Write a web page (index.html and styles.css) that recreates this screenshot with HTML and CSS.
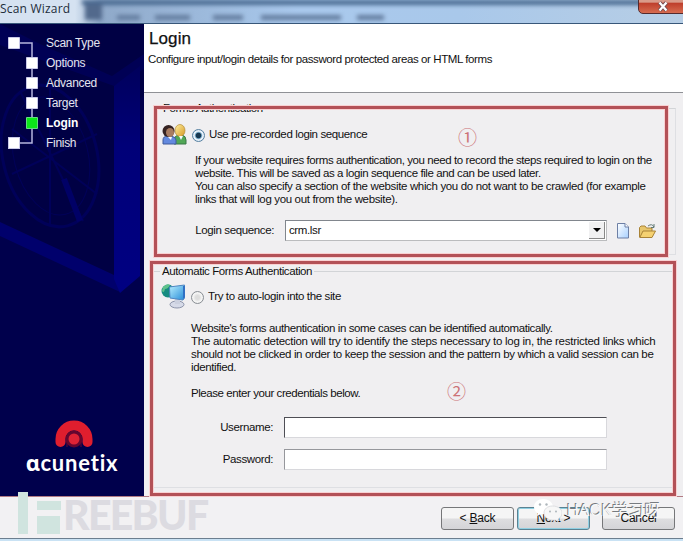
FILE: index.html
```html
<!DOCTYPE html>
<html lang="en">
<head>
<meta charset="utf-8">
<title>Scan Wizard</title>
<link rel="stylesheet" href="styles.css">
</head>
<body>
<div class="window">
  <header class="titlebar">
    <span class="title">Scan Wizard</span>
    <svg class="behind" width="683" height="23" viewBox="0 0 683 23"><g><path d="M82 0H683V5H82Z" fill="#48688f"/><path d="M85 4h17v16H85z" fill="#52698c"/><path d="M117 15h23v5h-23zM155 15h35v5h-35zM213 15h30v5h-30zM261 15h80v5h-80zM357 15h27v5h-27z" fill="#637c9e"/></g></svg>
    <button class="close" aria-label="Close"><svg width="12" height="11" viewBox="0 0 12 11"><path d="M2.5 1.5l7 8M9.5 1.5l-7 8" stroke="#6b4a50" stroke-width="4"/><path d="M2.5 1.5l7 8M9.5 1.5l-7 8" stroke="#fff" stroke-width="2.3"/></svg></button>
  </header>
  <div class="body">
    <aside class="sidebar">
      <svg class="art" width="144" height="472" viewBox="0 0 144 472">
        <defs><linearGradient id="edge" x2="0" y2="1"><stop stop-color="#00005c"/><stop offset=".35" stop-color="#000078"/><stop offset="1" stop-color="#000082"/></linearGradient></defs>
        <rect width="144" height="472" fill="#00004c"/>
        <path d="M0 0H144V72L119 87V255L0 199Z" fill="#000044"/>
        <path d="M0 0L40 20 112 52 144 30V45L114 62 0 21Z" fill="#000055"/>
        <path d="M0 198L114 251 120 268 0 212Z" fill="#00006c"/>
        <path d="M114 62L140 42V252L120 269 114 255Z" fill="url(#edge)"/>
        <g fill="none" stroke="#000059"><ellipse cx="50" cy="132" rx="47" ry="72" stroke-width="3" transform="rotate(-14 50 132)"/><ellipse cx="51" cy="132" rx="37" ry="60" transform="rotate(-14 51 132)"/><path d="M20 67l63 130M50 60v140M12 150l85-40M12 105l85 65" stroke-width="2"/><path d="M64 155l16 42" stroke-width="6" stroke="#000066"/></g>
      </svg>
      <svg class="rail" width="40" height="120" viewBox="0 0 40 120"><path d="M14 19H32V119H14" fill="none" stroke="#b5b5dd" stroke-width="1.5"/><g fill="#fff" stroke="#c9c9e8"><path d="M8.500 13.500h11v11h-11zM26.500 33.500h11v11h-11zM26.500 53.500h11v11h-11zM26.500 73.500h11v11h-11z"/><path d="M26.500 93.500h11v11h-11z" fill="#0ce719" stroke="#64dc80"/></g></svg>
      <span class="last-node"></span>
      <ol class="steps"><li>Scan Type</li><li>Options</li><li>Advanced</li><li>Target</li><li class="current">Login</li><li>Finish</li></ol>
      <div class="brand">
        <svg width="38" height="28" viewBox="0 0 38 28"><path d="M5.500 22V19a13.500 13.500 0 0 1 27 0v3" fill="none" stroke="#df1e2e" stroke-width="10" stroke-linecap="round"/><circle cx="19" cy="19" r="8.500" fill="#65062f"/><circle cx="19" cy="19" r="5.500" fill="#df2335"/><path d="M12 27v-7M26 27v-7" stroke="#65062f" stroke-width="1"/></svg>
        <span><i>ɑ</i>cunetix</span>
      </div>
    </aside>
    <main class="main">
      <div class="heading"><h1>Login</h1><p>Configure input/login details for password protected areas or HTML forms</p></div>
      <section class="group first">
        <h2>Forms Authentication</h2>
        <div class="choice">
          <svg width="25" height="21" viewBox="0 0 25 21"><defs><linearGradient id="face" x2="1" y2="1"><stop stop-color="#fff0a0"/><stop offset="1" stop-color="#d59824"/></linearGradient></defs><path d="M12 20v-4q0-4 5-5h3q4 1 4 5v4z" fill="#51a756" stroke="#397747"/><ellipse cx="18" cy="6.500" rx="5" ry="6" fill="url(#face)" stroke="#b38b36" stroke-width=".7"/><path d="M1 20v-4q0-4 5-4h3q5 1 5 4v4z" fill="#6389df" stroke="#405b9a"/><circle cx="6.500" cy="7" r="6" fill="#352322"/><ellipse cx="8" cy="8.500" rx="4" ry="4.500" fill="#a87c61"/><path d="M6 13l3 3 1-3M17 12l2 4 2-4" fill="#f4f8ff"/></svg>
          <i class="radio checked"></i><span>Use pre-recorded login sequence</span>
        </div>
        <p class="copy"><span class="a1">If your website requires forms authentication, you need to record the steps required to login on the</span><span class="a2">website. This will be saved as a login sequence file and can be used later.</span><span class="a3">You can also specify a section of the website which you do not want to be crawled (for example</span><span class="a4">links that will log you out from the website).</span></p>
        <div class="field select-row"><label>Login sequence:</label><div class="select"><span>crm.lsr</span><b></b></div>
          <svg class="doc" width="14" height="16" viewBox="0 0 14 16"><defs><linearGradient id="sheet" x2="1" y2="1"><stop stop-color="#fff"/><stop offset="1" stop-color="#a8d0ff"/></linearGradient></defs><path d="M1.500.5H9L12.500 4v11h-11z" fill="url(#sheet)" stroke="#6d7fa5"/><path d="M9 .5V4h3.500" fill="#fff" stroke="#6d7fa5"/></svg>
          <svg class="folder" width="17" height="16" viewBox="0 0 17 16"><path d="M.5 14V4.500L2 3h4l1.500 2H13v9z" fill="#e8c66c" stroke="#a98236"/><path d="M.8 14.500L4 8h12.500L13 14.500z" fill="#f5d171" stroke="#a98236"/><path d="M9 3q4-3 6 1m0-3v3.500h-3" fill="none" stroke="#637b78"/></svg>
        </div>
      </section>
      <section class="group second">
        <h2>Automatic Forms Authentication</h2>
        <div class="choice">
          <svg width="25" height="26" viewBox="0 0 25 26"><defs><linearGradient id="screen" x2="1" y2="1"><stop stop-color="#b9f0ff"/><stop offset="1" stop-color="#258bd8"/></linearGradient></defs><circle cx="7" cy="8" r="6.500" fill="#168b80"/><path d="M2 4q4-4 7-2-2 4-5 4-1 5-3 2z" fill="#5fc28b"/><ellipse cx="16" cy="21.500" rx="7" ry="3.500" fill="#d6dae8" stroke="#8d94aa"/><path d="M14 14h5v7h-5z" fill="#cbd0df"/><path d="M8.500 4L23.500 2v13L22 17 9 15z" fill="url(#screen)" stroke="#4e86c2"/><path d="M22 3v13l2-2V3z" fill="#3070c4"/></svg>
          <i class="radio"></i><span>Try to auto-login into the site</span>
        </div>
        <p class="copy"><span class="b1">Website's forms authentication in some cases can be identified automatically.</span><span class="b2">The automatic detection will try to identify the steps necessary to log in, the restricted links which</span><span class="b3">should not be clicked in order to keep the session and the pattern by which a valid session can be</span><span class="b4">identified.</span></p>
        <p class="credentials">Please enter your credentials below.</p>
        <div class="field"><label>Username:</label><input class="focused" aria-label="Username"></div>
        <div class="field"><label>Password:</label><input type="password" aria-label="Password"></div>
      </section>
    </main>
  </div>
  <footer class="footer"><button><span>&lt; <u>B</u>ack</span></button><button class="default"><span><u>N</u>ext &gt;</span></button><button class="cancel"><span>Cancel</span></button></footer>
  <div class="mark mark-one"></div><div class="mark mark-two"></div>
  <span class="number number-one">①</span><span class="number number-two">②</span>
  <div class="freebuf"><svg width="46" height="43" viewBox="0 0 46 43"><path d="M1 0h10v42H1z" fill="#d0e4df"/><path d="M20 9h24v9H20zM20 24h23v18H20z" fill="#d0e4df"/></svg><span>REEBUF</span></div>
  <div class="wechat"><svg width="28" height="22" viewBox="0 0 28 22"><path d="M9.500 0C4 0 0 3.500 0 8c0 3 1.500 5 3.500 6L3 17l4-2h4C16 15 19 12 19 8S15 0 9.500 0z" fill="#fff"/><path d="M18.500 7C13.500 7 10 10 10 14s4 7 8.500 7h3l3 1-.5-2c2-1 4-3 4-6 0-4-4-7-9.500-7z" fill="#f7f7f7" stroke="#dedfe2"/><g fill="#aeb6bb"><circle cx="6" cy="5.500" r="1.200"/><circle cx="12.500" cy="5.500" r="1.200"/><circle cx="16" cy="12.500" r="1"/><circle cx="22" cy="12.500" r="1"/></g></svg><span>HACK学习呀</span></div>
</div>
</body>
</html>
```
FILE: styles.css
```css
* { box-sizing: border-box; }
body { margin: 0; color: #111; font: 11.5px/13px "Liberation Sans", Arial, sans-serif; letter-spacing: -.38px; }
h1, h2, p, ol { margin: 0; padding: 0; font-weight: normal; }
.window { position: relative; width: 683px; height: 541px; overflow: hidden; background: #f0eff1; display: flex; flex-direction: column; border-bottom: 2px solid #c9e2f4; }
.titlebar { position: relative; height: 24px; flex: none; overflow: hidden; background: linear-gradient(90deg, #d5e2f1 0 75px, #8fa9c9 100px, #a9c9ed 300px, #a9c8ea 460px, #b7cee5); border-bottom: 1px solid #385779; }
.title { display: block; padding: 2px 0 0; font: 12px/14px "Open Sans", sans-serif; letter-spacing: .2px; color: #222d3b; }
.behind { position: absolute; top: 0; left: 0; filter: blur(2px); }
.close { position: absolute; right: -8px; top: -6px; width: 53px; height: 20px; border: 1px solid #542a2d; border-radius: 5px; background: linear-gradient(#d99b8a 40%, #be3e2b 45%, #d76c50); padding: 4px 4px 0 0; display: grid; place-items: center; }
.body { height: 473px; flex: none; display: flex; border-bottom: 1px solid #b27b84; }
.sidebar { position: relative; width: 144px; flex: none; background: #00004e; overflow: hidden; }
.art, .rail { position: absolute; top: 0; left: 0; }
.art { filter: blur(.6px); }
.last-node { position: absolute; left: 8px; top: 113px; width: 12px; height: 12px; background: #fff; border: 1px solid #c9c9e8; }
.steps { position: relative; list-style: none; padding: 9px 0 0 46px; color: #e4e4f0; }
.steps li { height: 20px; line-height: 20px; font-size: 12px; letter-spacing: -.3px; }
.steps .current { font-weight: bold; color: #fff; font-size: 12px; letter-spacing: -.1px; }
.brand { position: relative; width: 144px; margin-top: 267px; display: flex; flex-direction: column; align-items: center; color: #fff; }
.brand svg { margin-left: 3px; }
.brand span { font: 700 22px/22px Lato, sans-serif; letter-spacing: .8px; margin-top: 3px; white-space: nowrap; }
.brand i { font: 700 22px/22px "Noto Sans", sans-serif; }
.main { width: 539px; }
.heading { height: 69px; background: #fff; border-bottom: 1px solid #8f9196; padding: 4px 0 0 4px; }
.heading h1 { font-size: 17px; line-height: 21px; letter-spacing: .1px; margin-left: 1px; -webkit-text-stroke: .25px; }
.heading p { margin-top: 4px; letter-spacing: -.41px; }
.group { position: relative; margin-left: 10px; width: 522px; border: 1px solid #dedfe3; border-top-color: #d2d4d7; }
.group h2 { width: max-content; height: 13px; background: #f0eff1; font-size: 11.5px; line-height: 13px; padding: 0 2px; margin: -7px 0 0 6px; letter-spacing: -.41px; }
.first { margin-top: 15px; height: 147px; }
.second { margin-top: 16px; margin-left: 8px; height: 217px; width: 524px; }
.second h2 { margin-left: 7px; }
.choice { display: flex; align-items: center; }
.first .choice { height: 22px; margin: 8px 0 0 7px; }
.second .choice { height: 26px; margin: 5px 0 0 8px; }
.radio { width: 13px; height: 13px; margin: 2px 4px 0 5px; border: 1px solid #898e94; border-radius: 50%; background: radial-gradient(#ddd 25%, #f7f7f7 60%, #ccc); }
.choice > span { line-height: 20px; }
.checked { border-color: #5781a1; background: radial-gradient(#183851 0 30%, #6da0bf 40%, #f2f8ff 55%, #a3c4e0); }
.copy span { display: block; white-space: nowrap; line-height: 13px; }
.a1 { letter-spacing: -.42px; }
.a2, .b1 { letter-spacing: -.4px; }
.a3, .a4, .b3 { letter-spacing: -.35px; }
.b2 { letter-spacing: -.26px; }
.first .copy { margin: 9px 0 0 40px; }
.second .copy { margin: 13px 0 0 38px; }
.credentials { margin: 13px 0 0 38px; letter-spacing: -.43px; }
.field { display: flex; align-items: center; }
.field label { width: 90px; text-align: right; margin-right: 11px; }
.first .field { margin: 14px 0 0 29px; }
.select { height: 21px; width: 322px; background: #fff; border: 1px solid #bbbcbe; border-top-color: #81868d; border-left-color: #81868d; display: flex; align-items: center; padding: 0 1px 0 3px; justify-content: space-between; }
.select b { width: 16px; height: 17px; display: grid; place-items: center; background: #f1f1f2; border-right: 1px solid #888; border-bottom: 1px solid #888; }
.select b::after { content: ""; border: 4px solid transparent; border-top-color: #000; border-bottom: 0; }
.doc { margin-left: 9px; }
.folder { margin-left: 9px; }
.second .field { margin: 17px 0 0 30px; height: 21px; }
.second .field + .field { margin-top: 11px; }
.field input { width: 323px; height: 21px; border: 1px solid #d8d8dc; border-top-color: #96979c; border-left-color: #96979c; background: #fff; padding: 2px; }
.field .focused { border-top-color: #4e4e55; border-left-color: #4e4e55; }
.footer { height: 42px; flex: none; display: flex; align-items: center; padding: 2px 8px 0 441px; border-bottom: 1px solid #6c7e8f; background: #f2f1f3; }
.footer button { width: 73px; height: 23px; border: 1px solid #767779; border-radius: 3px; background: linear-gradient(#f5f5f5 48%, #dedee0 52%, #d4d4d7); padding: 0; font: 12px/15px "Liberation Sans", sans-serif; letter-spacing: -.2px; color: #111; }
.footer .default { border-color: #5b8292; box-shadow: inset 0 0 0 1px #8fcfe2; margin-left: 3px; }
.footer .cancel { margin-left: 12px; }
.mark { position: absolute; border: 3px solid #b35157; box-shadow: 0 0 0 1px #f9d1d2, inset 0 0 0 1px #f9d1d2; }
.mark-one { left: 154px; top: 106px; width: 514px; height: 151px; }
.mark-two { left: 150px; top: 261px; width: 526px; height: 235px; }
.number { position: absolute; color: #cc7277; font: 19px/22px "Noto Sans CJK SC", sans-serif; }
.number-one { left: 458px; top: 126px; }
.number-two { left: 447px; top: 380px; }
.freebuf { position: absolute; left: 17px; top: 492px; display: flex; }
.freebuf span { color: #dcdbe1; font: 900 41px/46px Lato, sans-serif; letter-spacing: -1.7px; margin: 0; }
.wechat { position: absolute; left: 534px; top: 499px; display: flex; color: #f8f8f8; text-shadow: -1px -1px #777b80; font: 16px/24px "Liberation Sans", "Noto Sans CJK SC", sans-serif; letter-spacing: .2px; }
.wechat span { margin-left: 5px; white-space: nowrap; }
```
